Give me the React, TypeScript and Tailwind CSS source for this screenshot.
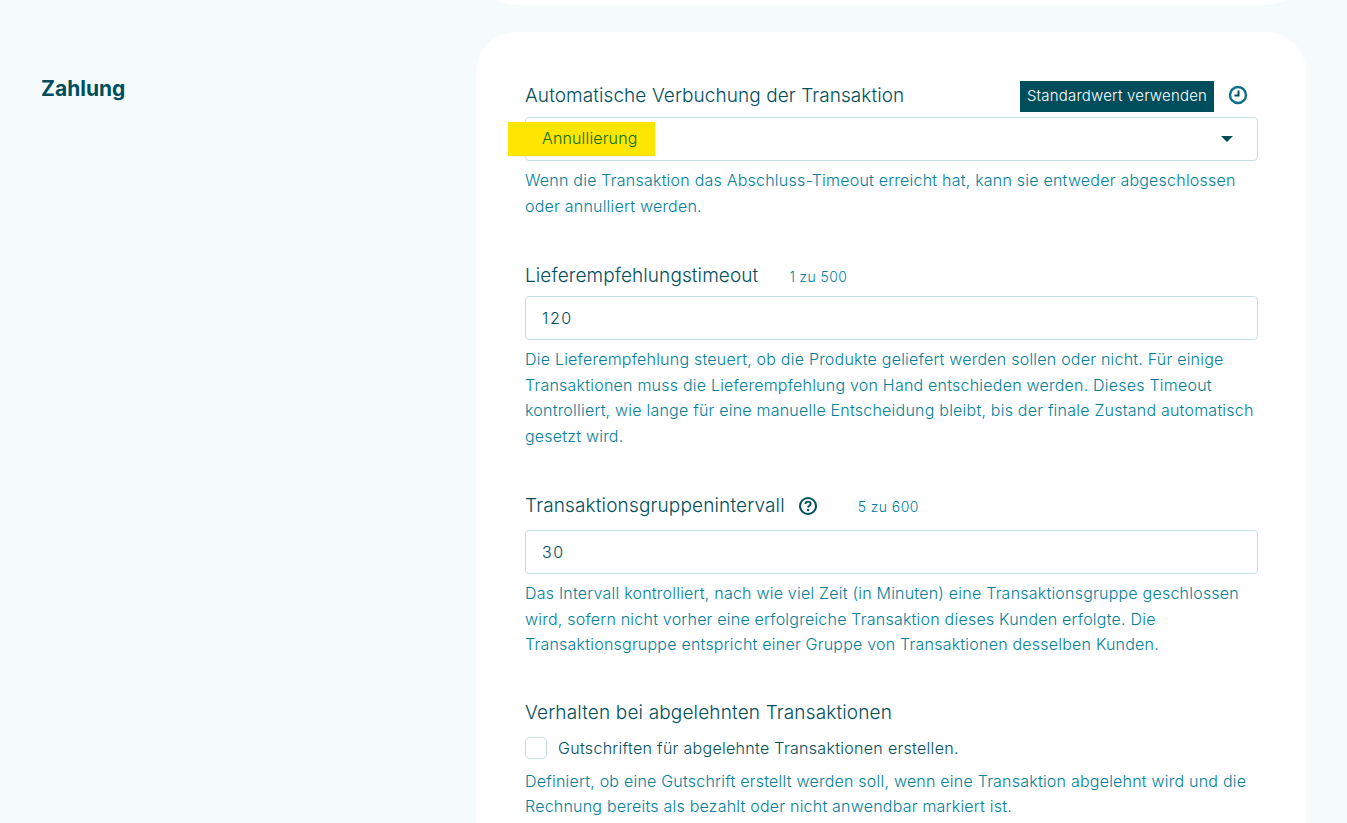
import React from "react";

function Help({ children, extra }: { children: React.ReactNode; extra?: string }) {
  return <p className={"text-[16px] leading-[25.5px] font-light tracking-[0.22px] text-[#007f9c] " + (extra ?? "mt-[7px]")}>{children}</p>;
}

function Field({ value, top }: { value: string; top: string }) {
  return (
    <div className={"flex h-[44px] items-center rounded-[4px] border border-[#c5e0e3] bg-white pl-[16px] text-[16px] font-light tracking-[1.6px] text-[#004e5c] " + top}>
      {value}
    </div>
  );
}

export default function App() {
  return (
    <div className="h-[823px] w-[1347px] overflow-hidden bg-[#f5fbfb] font-['Inter',sans-serif]">
      <div className="ml-[476px] -mt-[85px] h-[90px] w-[830px] rounded-[40px] bg-white" />
      <div className="mt-[27px] flex">
        <div className="w-[476px] pl-[41px] pt-[42px]">
          <h2 className="text-[21px] leading-[30px] font-bold text-[#004e5c]">Zahlung</h2>
        </div>
        <div className="h-[900px] w-[830px] rounded-[40px] bg-white pl-[49px] pr-[48px] pt-[49px]">
          <div className="flex h-[30px] items-center justify-between">
            <span className="text-[19px] font-light tracking-[0.08px] text-[#004e5c]">Automatische Verbuchung der Transaktion</span>
            <div className="flex items-center">
              <span className="flex h-[31px] w-[194px] items-center justify-center bg-[#004e5c] text-[15px] font-light tracking-[0.2px] text-white">Standardwert verwenden</span>
              <svg className="relative -top-[1px] ml-[14px] mr-[10px] h-[20px] w-[20px]" viewBox="0 0 20 20" fill="none">
                <circle cx="10" cy="10" r="8" stroke="#0b7089" strokeWidth="2.4" />
                <path d="M10.5 5.5V10.5H6.5" stroke="#004e5c" strokeWidth="2" />
              </svg>
            </div>
          </div>
          <div className="relative mt-[6px] flex h-[44px] items-center justify-between rounded-[4px] border border-[#c5e0e3] bg-white pl-[16px] pr-[24px] text-[16px] font-light text-[#004e5c]">
            <span className="absolute -left-[18px] top-[4px] h-[34px] w-[147px] bg-[#ffe600]" />
            <span className="relative -top-[1px] tracking-[0.15px] text-[#0a6a10]">Annullierung</span>
            <svg className="h-[8px] w-[12px]" viewBox="0 0 12 8"><path d="M0 1H12L6 7Z" fill="#004e5c" /></svg>
          </div>
          <Help>
            Wenn die Transaktion das Abschluss-Timeout erreicht hat, kann sie entweder abgeschlossen
            <br />
            oder annulliert werden.
          </Help>

          <div className="mt-[41px] flex h-[30px] items-center">
            <span className="relative top-[1px] text-[19px] font-light tracking-[0.1px] text-[#004e5c]">Lieferempfehlungstimeout</span>
            <span className="relative top-[1px] ml-[31px] text-[14px] font-light tracking-[0.4px] text-[#007f9c]">1 zu 500</span>
          </div>
          <Field value="120" top="mt-[6px]" />
          <Help>
            Die Lieferempfehlung steuert, ob die Produkte geliefert werden sollen oder nicht. Für einige
            <br />
            Transaktionen muss die Lieferempfehlung von Hand entschieden werden. Dieses Timeout
            <br />
            kontrolliert, wie lange für eine manuelle Entscheidung bleibt, bis der finale Zustand automatisch
            <br />
            gesetzt wird.
          </Help>

          <div className="mt-[42px] flex h-[30px] items-center">
            <span className="text-[19px] font-light tracking-[0.15px] text-[#004e5c]">Transaktionsgruppenintervall</span>
            <svg className="ml-[13px] h-[20px] w-[20px]" viewBox="0 0 20 20" fill="none">
              <circle cx="10" cy="10" r="8" stroke="#004e5c" strokeWidth="2" />
              <path d="M7.4 8C7.5 6.4 8.6 5.6 10 5.6C11.5 5.6 12.6 6.5 12.6 7.8C12.6 9.6 10.1 9.7 10.1 11.6" stroke="#004e5c" strokeWidth="1.9" />
              <circle cx="10.1" cy="14" r="1.2" fill="#004e5c" />
            </svg>
            <span className="ml-[40px] text-[14px] font-light tracking-[0.4px] text-[#007f9c]">5 zu 600</span>
          </div>
          <Field value="30" top="mt-[9px]" />
          <Help>
            Das Intervall kontrolliert, nach wie viel Zeit (in Minuten) eine Transaktionsgruppe geschlossen
            <br />
            wird, sofern nicht vorher eine erfolgreiche Transaktion dieses Kunden erfolgte. Die
            <br />
            Transaktionsgruppe entspricht einer Gruppe von Transaktionen desselben Kunden.
          </Help>

          <div className="mt-[40px] text-[19px] leading-[30px] font-light tracking-[0.15px] text-[#004e5c]">Verhalten bei abgelehnten Transaktionen</div>
          <div className="mt-[8px] flex items-center">
            <span className="h-[22px] w-[22px] rounded-[5px] border-[1.5px] border-[#c5e0e3] bg-white" />
            <span className="ml-[11px] text-[16px] font-light tracking-[0.3px] text-[#004e5c]">Gutschriften für abgelehnte Transaktionen erstellen.</span>
          </div>
          <Help extra="mt-[9px]">
            Definiert, ob eine Gutschrift erstellt werden soll, wenn eine Transaktion abgelehnt wird und die
            <br />
            Rechnung bereits als bezahlt oder nicht anwendbar markiert ist.
          </Help>
        </div>
      </div>
    </div>
  );
}
